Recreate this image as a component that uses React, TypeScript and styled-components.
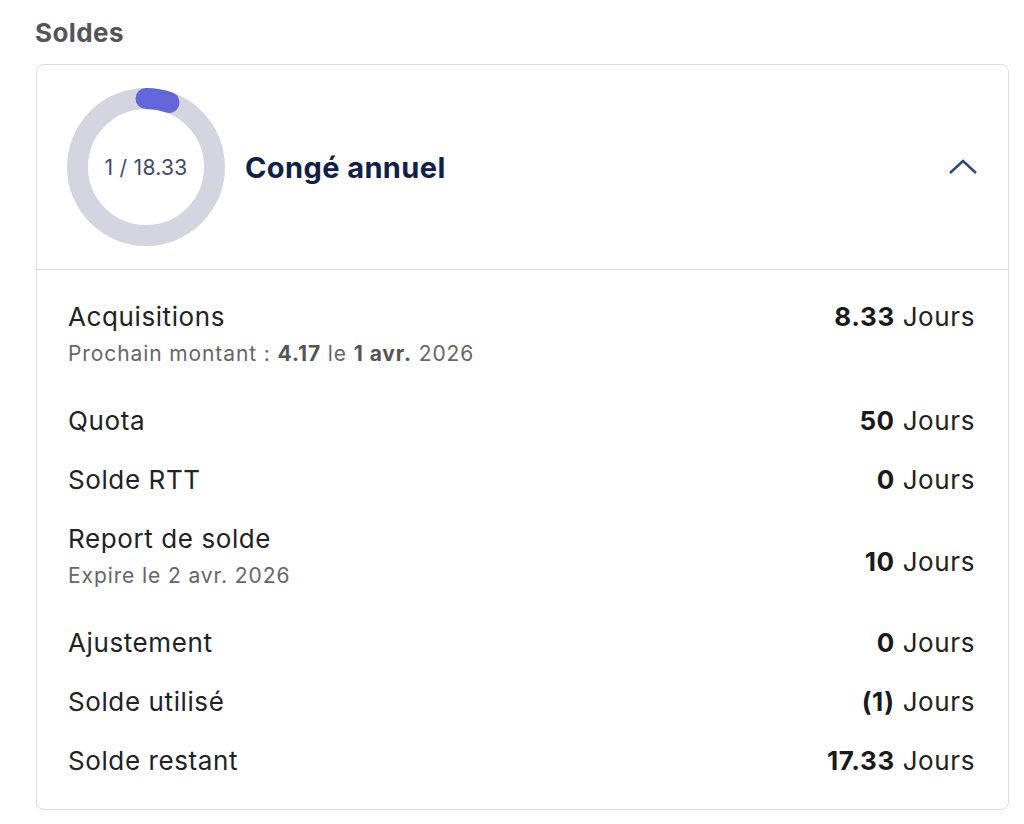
import React from 'react';
import styled, { createGlobalStyle } from 'styled-components';

const GlobalStyle = createGlobalStyle`
  html, body {
    margin: 0;
    padding: 0;
    background: #ffffff;
  }
  body {
    font-family: Inter, "Open Sans", "Liberation Sans", sans-serif;
    color: #222222;
  }
`;

const Page = styled.div`
  padding: 14px 15px 14px 35px;
`;

const Heading = styled.h2`
  margin: 0 0 12px;
  font-size: 26px;
  line-height: 38px;
  font-weight: 700;
  letter-spacing: 0.4px;
  color: #555555;
`;

const Card = styled.section`
  margin-left: 1px;
  border: 1px solid #dcdde4;
  border-radius: 8px;
  background: #ffffff;
  overflow: hidden;
`;

const CardHeader = styled.div`
  display: flex;
  align-items: center;
  gap: 20px;
  padding: 23px 30px 23px 30px;
  border-bottom: 1px solid #dcdde4;
`;

const Donut = styled.div`
  position: relative;
  width: 158px;
  height: 158px;
  flex: none;
`;

const DonutLabel = styled.span`
  position: absolute;
  inset: 0;
  display: flex;
  align-items: center;
  justify-content: center;
  font-size: 21px;
  letter-spacing: 0.3px;
  color: #3d4a6b;
`;

const Title = styled.h3`
  flex: 1;
  margin: 0;
  font-size: 29px;
  font-weight: 700;
  letter-spacing: 0.4px;
  color: #0f2147;
`;

const Toggle = styled.button`
  display: flex;
  align-items: center;
  justify-content: flex-end;
  width: 40px;
  height: 40px;
  padding: 0;
  border: none;
  background: none;
  cursor: pointer;
`;

const CardBody = styled.div`
  padding: 17px 33px 19px 31px;
`;

const Row = styled.div<{ $alignTop?: boolean }>`
  display: flex;
  justify-content: space-between;
  align-items: ${({ $alignTop }) => ($alignTop ? 'flex-start' : 'center')};
  padding: 12px 0;
`;

const LabelBlock = styled.div`
  display: flex;
  flex-direction: column;
`;

const Label = styled.span`
  font-size: 26px;
  line-height: 35px;
  letter-spacing: 0.6px;
  color: #222222;
`;

const Sub = styled.span`
  margin: 5px 0 10px;
  font-size: 21px;
  line-height: 30px;
  letter-spacing: 0.9px;
  color: #666666;

  b {
    font-weight: 700;
    color: #555555;
  }
`;

const Value = styled.span`
  font-size: 26px;
  line-height: 35px;
  letter-spacing: 0.6px;
  color: #222222;
  white-space: nowrap;

  b {
    font-weight: 700;
    color: #1a1a1a;
  }
`;

interface Line {
  label: string;
  amount: string;
  sub?: React.ReactNode;
  alignTop?: boolean;
}

const lines: Line[] = [
  {
    label: 'Acquisitions',
    amount: '8.33',
    alignTop: true,
    sub: (
      <>
        Prochain montant : <b>4.17</b> le <b>1 avr.</b> 2026
      </>
    ),
  },
  { label: 'Quota', amount: '50' },
  { label: 'Solde RTT', amount: '0' },
  { label: 'Report de solde', amount: '10', sub: 'Expire le 2 avr. 2026' },
  { label: 'Ajustement', amount: '0' },
  { label: 'Solde utilisé', amount: '(1)' },
  { label: 'Solde restant', amount: '17.33' },
];

function Ring({ used, total }: { used: number; total: number }) {
  const r = 68.5;
  const c = 2 * Math.PI * r;
  const part = (used / total) * c;
  return (
    <svg width="158" height="158" viewBox="0 0 158 158">
      <circle cx="79" cy="79" r={r} fill="none" stroke="#d3d6e0" strokeWidth="21" />
      <circle
        cx="79"
        cy="79"
        r={r}
        fill="none"
        stroke="#6366d9"
        strokeWidth="21"
        strokeLinecap="round"
        strokeDasharray={`${part} ${c}`}
        transform="rotate(-90 79 79)"
      />
    </svg>
  );
}

export default function App() {
  return (
    <>
      <GlobalStyle />
      <Page>
        <Heading>Soldes</Heading>
        <Card>
          <CardHeader>
            <Donut>
              <Ring used={1} total={18.33} />
              <DonutLabel>1 / 18.33</DonutLabel>
            </Donut>
            <Title>Congé annuel</Title>
            <Toggle aria-label="Réduire">
              <svg width="30" height="16" viewBox="0 0 30 16">
                <path d="M2 14 L15 2 L28 14" fill="none" stroke="#2c4a7e" strokeWidth="2.4" />
              </svg>
            </Toggle>
          </CardHeader>
          <CardBody>
            {lines.map((l) => (
              <Row key={l.label} $alignTop={l.alignTop}>
                <LabelBlock>
                  <Label>{l.label}</Label>
                  {l.sub && <Sub>{l.sub}</Sub>}
                </LabelBlock>
                <Value>
                  <b>{l.amount}</b> Jours
                </Value>
              </Row>
            ))}
          </CardBody>
        </Card>
      </Page>
    </>
  );
}
